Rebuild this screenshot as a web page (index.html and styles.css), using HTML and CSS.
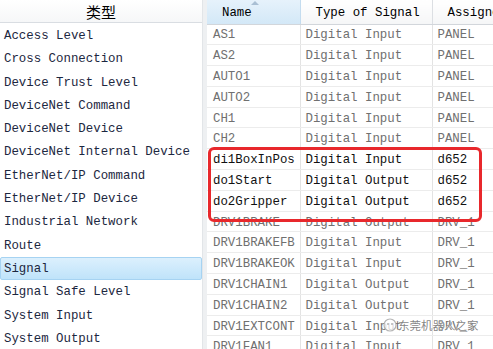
FILE: index.html
```html
<!DOCTYPE html>
<html lang="zh">

<head>
    <meta charset="UTF-8">
    <meta name="viewport" content="width=device-width, initial-scale=1.0">
    <title>类型 - Signal</title>
    <link rel="stylesheet" href="styles.css">
</head>

<body>
    <div id="janela">
        <div id="painel-tipos">
            <div class="cabecalho-tipos">类型</div>
            <ul id="lista-tipos">
                <li>Access Level</li>
                <li>Cross Connection</li>
                <li>Device Trust Level</li>
                <li>DeviceNet Command</li>
                <li>DeviceNet Device</li>
                <li>DeviceNet Internal Device</li>
                <li>EtherNet/IP Command</li>
                <li>EtherNet/IP Device</li>
                <li>Industrial Network</li>
                <li>Route</li>
                <li class="selecionado">Signal</li>
                <li>Signal Safe Level</li>
                <li>System Input</li>
                <li>System Output</li>
            </ul>
        </div>
        <div class="divisor"></div>
        <div id="painel-sinais">
            <table id="tabela-sinais">
                <colgroup>
                    <col class="col-nome">
                    <col class="col-tipo">
                    <col class="col-unidade">
                </colgroup>
                <thead>
                    <tr>
                        <th class="ordenado">Name<span class="seta"></span></th>
                        <th>Type of Signal</th>
                        <th>Assigned to Device</th>
                    </tr>
                </thead>
                <tbody>
                    <tr><td>AS1</td><td>Digital Input</td><td>PANEL</td></tr>
                    <tr><td>AS2</td><td>Digital Input</td><td>PANEL</td></tr>
                    <tr><td>AUTO1</td><td>Digital Input</td><td>PANEL</td></tr>
                    <tr><td>AUTO2</td><td>Digital Input</td><td>PANEL</td></tr>
                    <tr><td>CH1</td><td>Digital Input</td><td>PANEL</td></tr>
                    <tr><td>CH2</td><td>Digital Input</td><td>PANEL</td></tr>
                    <tr class="novo"><td>di1BoxInPos</td><td>Digital Input</td><td>d652</td></tr>
                    <tr class="novo"><td>do1Start</td><td>Digital Output</td><td>d652</td></tr>
                    <tr class="novo"><td>do2Gripper</td><td>Digital Output</td><td>d652</td></tr>
                    <tr><td>DRV1BRAKE</td><td>Digital Output</td><td>DRV_1</td></tr>
                    <tr><td>DRV1BRAKEFB</td><td>Digital Input</td><td>DRV_1</td></tr>
                    <tr><td>DRV1BRAKEOK</td><td>Digital Input</td><td>DRV_1</td></tr>
                    <tr><td>DRV1CHAIN1</td><td>Digital Output</td><td>DRV_1</td></tr>
                    <tr><td>DRV1CHAIN2</td><td>Digital Output</td><td>DRV_1</td></tr>
                    <tr><td>DRV1EXTCONT</td><td>Digital Input</td><td>DRV_1</td></tr>
                    <tr><td>DRV1FAN1</td><td>Digital Input</td><td>DRV_1</td></tr>
                </tbody>
            </table>
            <div class="destaque"></div>
        </div>
    </div>

    <div class="marca-agua">
        <svg width="14" height="14" viewBox="0 0 14 14">
            <circle cx="7" cy="7" r="6" fill="rgba(255,255,255,0.75)" stroke="#b5b5b5" stroke-width="1.2"/>
            <circle cx="5" cy="6" r="1" fill="#b5b5b5"/>
            <circle cx="9" cy="6" r="1" fill="#b5b5b5"/>
        </svg>
        <span>东莞机器人之家</span>
    </div>
</body>

</html>
```

FILE: styles.css
```css
* {
    margin: 0px;
    padding: 0px;
    box-sizing: border-box;
}

body {
    width: 493px;
    height: 349px;
    overflow: hidden;
    background-color: #ffffff;
    font-family: "Liberation Mono", "DejaVu Sans Mono", monospace;
    font-size: 12.4px;
    position: relative;
}

div#janela {
    display: flex;
    height: 100%;
}

div#painel-tipos {
    width: 202px;
    flex-shrink: 0;
    background-color: #ffffff;
}

.cabecalho-tipos {
    height: 23px;
    line-height: 24px;
    text-align: center;
    font-family: "Noto Sans CJK SC", sans-serif;
    font-size: 15px;
    color: #000000;
    background: linear-gradient(#ffffff, #f6f7f8);
    border-bottom: 1px solid #d9dde2;
}

ul#lista-tipos {
    list-style: none;
    padding-top: 1px;
}

ul#lista-tipos li {
    height: 23.3px;
    line-height: 24.3px;
    padding-left: 4px;
    color: #1c2740;
    white-space: nowrap;
}

ul#lista-tipos li.selecionado {
    background: linear-gradient(#dcf0fd, #bfe3fa);
    border: 1px solid #a6d3f2;
    border-radius: 2px;
    line-height: 22.3px;
    padding-left: 3px;
}

.divisor {
    width: 5px;
    flex-shrink: 0;
    background-color: #eef0f2;
    border-left: 1px solid #e2e5e8;
}

div#painel-sinais {
    flex: 1;
    overflow: hidden;
    position: relative;
}

table#tabela-sinais {
    border-collapse: collapse;
    table-layout: fixed;
    width: 380px;
}

col.col-nome {
    width: 93px;
}

col.col-tipo {
    width: 132px;
}

col.col-unidade {
    width: 155px;
}

table#tabela-sinais th {
    height: 24px;
    padding-top: 2px;
    text-align: left;
    padding-left: 15px;
    font-weight: normal;
    color: #000000;
    white-space: nowrap;
    overflow: hidden;
    background: linear-gradient(#ffffff, #f5f6f7);
    border-right: 1px solid #dcdfe3;
    border-bottom: 1px solid #d2d6db;
    position: relative;
}

table#tabela-sinais th.ordenado {
    background: linear-gradient(#e6f2fb, #d3e8f7);
    border-right: 1px solid #c4dcef;
}

.seta {
    position: absolute;
    top: 1px;
    left: 44px;
    width: 0;
    height: 0;
    border-left: 4px solid transparent;
    border-right: 4px solid transparent;
    border-bottom: 4px solid #a9bfd3;
}

table#tabela-sinais td {
    height: 20.8px;
    padding-top: 2px;
    padding-left: 5px;
    color: #707070;
    white-space: nowrap;
    overflow: hidden;
    border-right: 1px solid #e3e3e3;
    border-bottom: 1px solid #ececec;
}

table#tabela-sinais td:first-child {
    padding-left: 6px;
}

table#tabela-sinais tr.novo td {
    color: #111111;
}

.destaque {
    position: absolute;
    left: 1px;
    top: 147px;
    width: 274px;
    height: 75px;
    border: 3px solid #e8282c;
    border-radius: 6px;
}

.marca-agua {
    position: absolute;
    left: 383px;
    top: 317px;
    display: flex;
    align-items: center;
    gap: 1px;
    font-family: "Noto Sans CJK SC", sans-serif;
    font-size: 11.5px;
    color: rgba(90, 90, 90, 0.75);
    text-shadow: 0 0 2px #ffffff, 0 0 2px #ffffff;
}
```
